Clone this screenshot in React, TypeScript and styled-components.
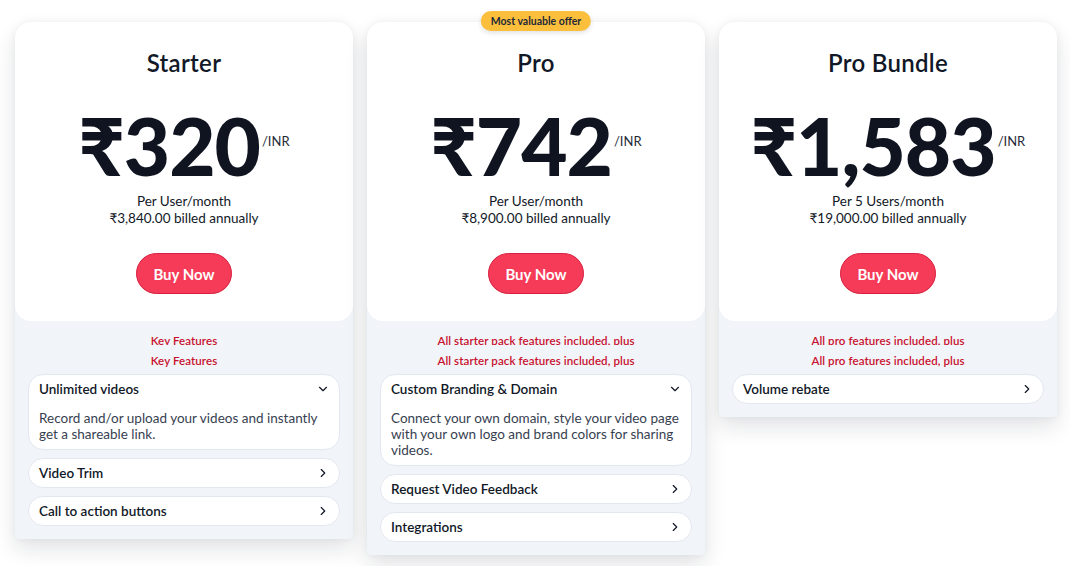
import React from 'react';
import styled, { createGlobalStyle } from 'styled-components';
import { ChevronDown, ChevronRight } from 'lucide-react';

type Feature = {
	title: string;
	description?: string;
};

type Plan = {
	name: string;
	price: string;
	unit: string;
	billed: string;
	heading: string;
	badge?: string;
	features: Feature[];
};

const plans: Plan[] = [
	{
		name: 'Starter',
		price: '₹320',
		unit: 'Per User/month',
		billed: '₹3,840.00 billed annually',
		heading: 'Key Features',
		features: [
			{
				title: 'Unlimited videos',
				description: 'Record and/or upload your videos and instantly get a shareable link.',
			},
			{ title: 'Video Trim' },
			{ title: 'Call to action buttons' },
		],
	},
	{
		name: 'Pro',
		price: '₹742',
		unit: 'Per User/month',
		billed: '₹8,900.00 billed annually',
		heading: 'All starter pack features included, plus',
		badge: 'Most valuable offer',
		features: [
			{
				title: 'Custom Branding & Domain',
				description:
					'Connect your own domain, style your video page with your own logo and brand colors for sharing videos.',
			},
			{ title: 'Request Video Feedback' },
			{ title: 'Integrations' },
		],
	},
	{
		name: 'Pro Bundle',
		price: '₹1,583',
		unit: 'Per 5 Users/month',
		billed: '₹19,000.00 billed annually',
		heading: 'All pro features included, plus',
		features: [{ title: 'Volume rebate' }],
	},
];

const GlobalStyle = createGlobalStyle`
	html, body {
		margin: 0;
		padding: 0;
		background: #ffffff;
	}
	body {
		font-family: Lato, "Noto Sans", "DejaVu Sans", sans-serif;
		color: #111827;
	}
	* {
		box-sizing: border-box;
	}
`;

const FeatureItem = ({ title, description }: Feature) => {
	return (
		<Item>
			<ItemHeader>
				<ItemTitle>{title}</ItemTitle>
				{description ? (
					<ChevronDown size={14} strokeWidth={2} />
				) : (
					<ChevronRight size={14} strokeWidth={2} />
				)}
			</ItemHeader>
			{description && <ItemBody>{description}</ItemBody>}
		</Item>
	);
};

const PlanCard = ({ plan }: { plan: Plan }) => {
	return (
		<Card>
			{plan.badge && <Badge>{plan.badge}</Badge>}
			<Top>
				<PlanName>{plan.name}</PlanName>
				<PriceRow>
					<Price>{plan.price}</Price>
					<Currency>/INR</Currency>
				</PriceRow>
				<Unit>{plan.unit}</Unit>
				<Unit>{plan.billed}</Unit>
				<BuyButton>Buy Now</BuyButton>
			</Top>
			<Bottom>
				{/* the heading is rendered twice in the source, the first copy clipped */}
				<ClippedHeading>{plan.heading}</ClippedHeading>
				<Heading>{plan.heading}</Heading>
				<FeatureList>
					{plan.features.map(f => (
						<FeatureItem key={f.title} {...f} />
					))}
				</FeatureList>
			</Bottom>
		</Card>
	);
};

export default function App() {
	return (
		<>
			<GlobalStyle />
			<Page>
				{plans.map(p => (
					<PlanCard key={p.name} plan={p} />
				))}
			</Page>
		</>
	);
}

const Page = styled.div`
	display: flex;
	align-items: flex-start;
	gap: 14px;
	padding: 22px 15px;
`;

const Card = styled.div`
	position: relative;
	width: 338px;
	flex: 0 0 338px;
	border-radius: 16px 16px 4px 4px;
	background: #f1f4f8;
	box-shadow: 0 10px 22px rgba(15, 23, 42, 0.12), 0 0 8px rgba(15, 23, 42, 0.05);
`;

const Badge = styled.div`
	position: absolute;
	top: -11px;
	left: 50%;
	transform: translateX(-50%);
	padding: 3px 10px;
	border-radius: 999px;
	background: #fbbf3c;
	color: #1f2937;
	font-size: 10.5px;
	font-weight: 700;
	line-height: 14px;
	white-space: nowrap;
	box-shadow: 0 2px 5px rgba(0, 0, 0, 0.12);
`;

const Top = styled.div`
	display: flex;
	flex-direction: column;
	align-items: center;
	padding: 26px 0 27px;
	background: #ffffff;
	border-radius: 16px;
`;

const PlanName = styled.h2`
	margin: 0;
	font-size: 24px;
	font-weight: 600;
	line-height: 30px;
	color: #111827;
	letter-spacing: 0.3px;
`;

const PriceRow = styled.div`
	display: flex;
	align-items: flex-start;
	margin-top: 27px;
	height: 88px;
`;

const Price = styled.span`
	font-size: 80px;
	font-weight: 900;
	line-height: 80px;
	color: #0f1420;
	letter-spacing: -1px;
`;

const Currency = styled.span`
	margin-top: 28px;
	margin-left: 2px;
	font-size: 13px;
	line-height: 16px;
	color: #1f2937;
`;

const Unit = styled.div`
	font-size: 13.5px;
	line-height: 17px;
	color: #111827;

	&:first-of-type {
		margin-top: 7px;
	}
`;

const BuyButton = styled.button`
	margin-top: 26px;
	height: 41px;
	padding: 0 16px;
	border: 1px solid #d61f3f;
	border-radius: 999px;
	background: #f53b57;
	color: #ffffff;
	font-family: inherit;
	font-size: 15px;
	font-weight: 700;
	cursor: pointer;
`;

const Bottom = styled.div`
	padding: 12px 13px 13px;
`;

const Heading = styled.div`
	text-align: center;
	color: #c8102e;
	font-size: 11.5px;
	font-weight: 600;
	line-height: 16px;
	letter-spacing: 0.1px;
`;

const ClippedHeading = styled(Heading)`
	height: 12px;
	overflow: hidden;
	margin-bottom: 8px;
`;

const FeatureList = styled.div`
	display: flex;
	flex-direction: column;
	gap: 8px;
	margin-top: 5px;
`;

const Item = styled.div`
	background: #ffffff;
	border: 1px solid #e3e8ef;
	border-radius: 15px;
`;

const ItemHeader = styled.div`
	display: flex;
	align-items: center;
	justify-content: space-between;
	height: 28px;
	padding: 0 9px 0 10px;
	color: #111827;
`;

const ItemTitle = styled.span`
	font-size: 13.5px;
	font-weight: 600;
	line-height: 16px;
`;

const ItemBody = styled.p`
	margin: 7px 0 0;
	padding: 0 8px 7px 10px;
	font-size: 13.5px;
	line-height: 16px;
	color: #374151;
`;
